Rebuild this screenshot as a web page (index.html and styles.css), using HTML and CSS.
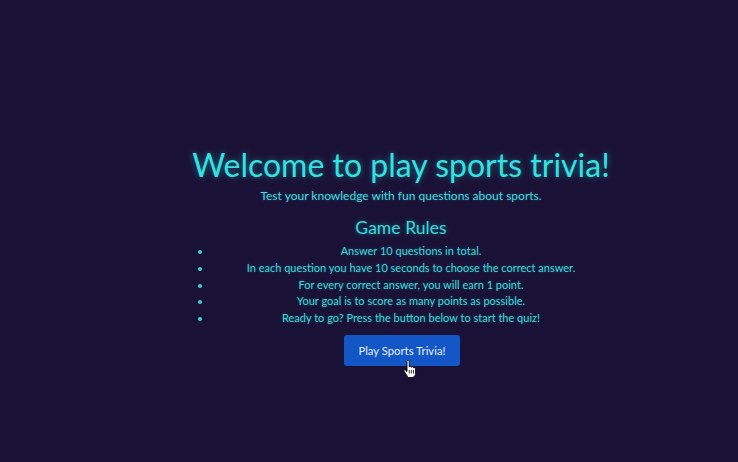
FILE: index.html
```html
<!DOCTYPE html>
<html>
<head>
<meta charset="utf-8">
<link rel="stylesheet" href="styles.css">
</head>
<body>
<main class="quiz">
  <h1 class="title">Welcome to play sports trivia!</h1>
  <p class="subtitle">Test your knowledge with fun questions about sports.</p>
  <h2 class="rules-title">Game Rules</h2>
  <ul class="rules">
    <li>Answer 10 questions in total.</li>
    <li>In each question you have 10 seconds to choose the correct answer.</li>
    <li>For every correct answer, you will earn 1 point.</li>
    <li>Your goal is to score as many points as possible.</li>
    <li>Ready to go? Press the button below to start the quiz!</li>
  </ul>
  <div class="actions">
    <button class="start">Play Sports Trivia!</button>
    <svg class="cursor" width="14" height="18" viewBox="0 0 14 18">
      <path d="M4 1.5c0-.8.5-1.3 1.1-1.3s1.1.5 1.1 1.3V7l.3-.1c.3-1 1.8-1 2 0l.1.4c.4-.8 1.8-.7 2 .2l.1.5c.5-.6 1.8-.4 1.9.6v4.6c0 2-1.2 3.6-2.8 4.3H5.6c-.8-.6-1.6-1.6-2.3-2.7L1 11.2c-.5-.9.4-1.8 1.3-1.2L4 11.5z" fill="#fff" stroke="#000" stroke-width="0.9" stroke-linejoin="round"/>
      <path d="M6.3 10v3.5M8.4 10v3.5M10.5 10v3.5" stroke="#000" stroke-width="0.8"/>
    </svg>
  </div>
</main>
</body>
</html>
```

FILE: styles.css
```css
html, body {
  margin: 0;
  padding: 0;
}
body {
  background: #1a1236;
  width: 738px;
  height: 462px;
  overflow: hidden;
  font-family: Lato, "Noto Sans", sans-serif;
  color: #2fdcdc;
}
.quiz {
  width: 418px;
  margin-left: 192px;
  padding-top: 145px;
  text-align: center;
}
.title {
  margin: 0;
  font-size: 32px;
  font-weight: 400;
  line-height: 40px;
  color: #32e2e2;
  text-shadow: 0 0 6px rgba(50, 226, 226, 0.45);
  white-space: nowrap;
}
.subtitle {
  margin: 3px 0 0;
  font-size: 12px;
  line-height: 16px;
  color: #46d8de;
  text-shadow: 0 0 3px rgba(50, 226, 226, 0.3);
}
.rules-title {
  margin: 12px 0 0;
  font-size: 17.6px;
  font-weight: 400;
  line-height: 24px;
  color: #32dcdc;
  text-shadow: 0 0 5px rgba(50, 226, 226, 0.4);
}
.rules {
  margin: 3px 0 0;
  padding-left: 20px;
  font-size: 11px;
  line-height: 16.8px;
  color: #3fd6da;
  text-shadow: 0 0 3px rgba(50, 226, 226, 0.3);
}
.actions {
  position: relative;
  margin-top: 8px;
  display: flex;
  justify-content: center;
  padding-left: 2px;
}
.start {
  width: 116px;
  height: 31px;
  background: #1356c6;
  color: #e8eefc;
  border: none;
  border-radius: 3px;
  font-family: Lato, "Noto Sans", sans-serif;
  font-size: 11.3px;
  padding: 0;
}
.cursor {
  position: absolute;
  left: 211px;
  top: 25px;
}
```
